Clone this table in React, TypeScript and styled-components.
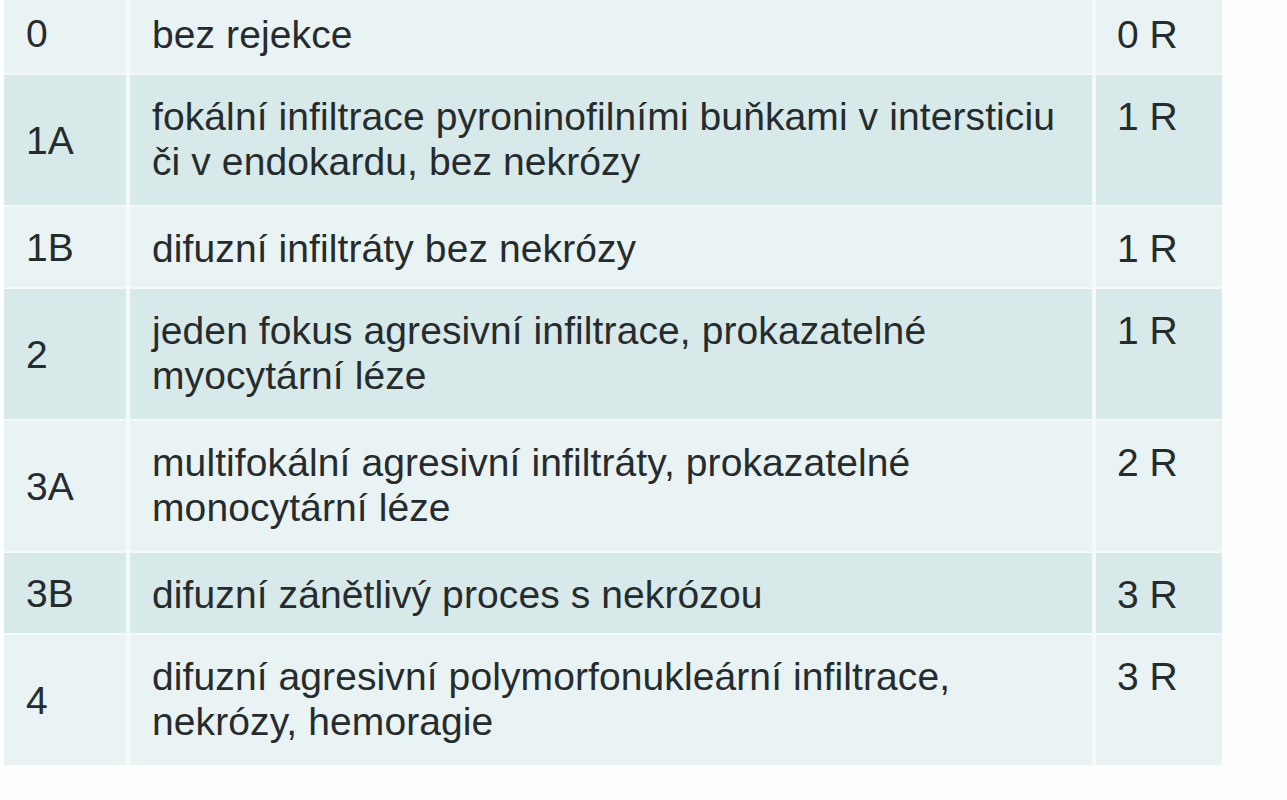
import React from 'react'
import styled, { createGlobalStyle } from 'styled-components'

const GlobalStyle = createGlobalStyle`
  html, body {
    margin: 0;
    padding: 0;
    background: #fdfefe;
  }
  body {
    font-family: "Liberation Sans", Arial, sans-serif;
    color: #262c2e;
  }
`

type Grade = {
  code: string
  text: string[]
  result: string
}

const grades: Grade[] = [
  { code: '0', text: ['bez rejekce'], result: '0 R' },
  {
    code: '1A',
    text: ['fokální infiltrace pyroninofilními buňkami v intersticiu', 'či v endokardu, bez nekrózy'],
    result: '1 R',
  },
  { code: '1B', text: ['difuzní infiltráty bez nekrózy'], result: '1 R' },
  { code: '2', text: ['jeden fokus agresivní infiltrace, prokazatelné', 'myocytární léze'], result: '1 R' },
  { code: '3A', text: ['multifokální agresivní infiltráty, prokazatelné', 'monocytární léze'], result: '2 R' },
  { code: '3B', text: ['difuzní zánětlivý proces s nekrózou'], result: '3 R' },
  { code: '4', text: ['difuzní agresivní polymorfonukleární infiltrace,', 'nekrózy, hemoragie'], result: '3 R' },
]

function App() {
  return (
    <>
      <GlobalStyle />
      <Page>
        <Table>
          {grades.map((g, i) => (
            <Row key={g.code} $dark={i % 2 === 1} $lines={g.text.length}>
              <CodeCell>{g.code}</CodeCell>
              <TextCell>
                {g.text.map((line) => (
                  <Line key={line}>{line}</Line>
                ))}
              </TextCell>
              <ResultCell>{g.result}</ResultCell>
            </Row>
          ))}
        </Table>
      </Page>
    </>
  )
}

export default App

const Page = styled.div`
  width: 1287px;
  height: 800px;
  overflow: hidden;
  padding-left: 4px;
  box-sizing: border-box;
`

const Table = styled.div`
  display: flex;
  flex-direction: column;
  gap: 2px;
  width: 1218px;
  margin-top: -7px;
  background: #f4f9f9;
`

const Row = styled.div<{ $dark: boolean; $lines: number }>`
  display: grid;
  grid-template-columns: 122px 962px 126px;
  column-gap: 4px;
  height: ${(p) => (p.$lines > 1 ? 130 : 80)}px;
  background: #f4f9f9;

  & > div {
    background: ${(p) => (p.$dark ? '#d8e9e9' : '#e9f3f3')};
  }
`

const Cell = styled.div`
  font-size: 39px;
  line-height: 45px;
  padding: 19px 22px 0;
  box-sizing: border-box;
  white-space: nowrap;
`

const CodeCell = styled(Cell)`
  display: flex;
  align-items: center;
  padding-top: 0;
`

const TextCell = styled(Cell)`
  display: flex;
  flex-direction: column;
  letter-spacing: 0.1px;
`

const Line = styled.span`
  display: block;
`

const ResultCell = styled(Cell)`
  padding-left: 21px;
`
